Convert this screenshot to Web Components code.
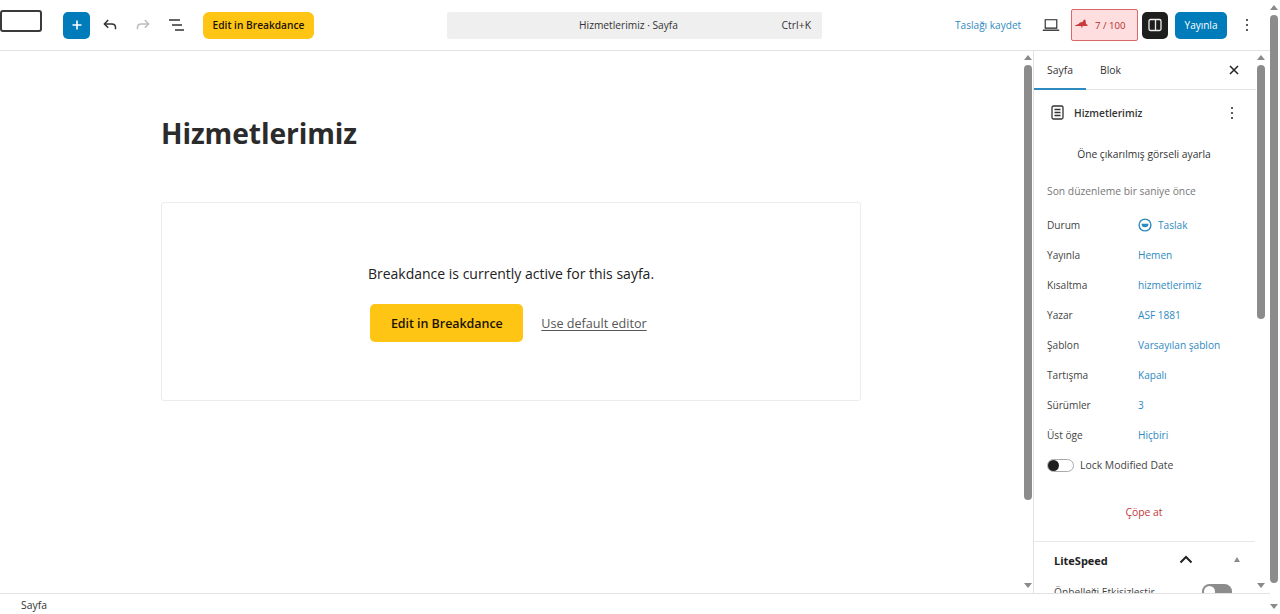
<!DOCTYPE html>
<html lang="tr"><head><meta charset="utf-8"><title>Hizmetlerimiz</title>
<style>
html,body{margin:0;height:100%;overflow:hidden;background:#fff}
body{font-family:"Open Sans","Noto Sans","Liberation Sans",sans-serif;color:#1e1e1e;display:flex;height:614px}
</style></head><body>
<wp-app></wp-app>
<script>
function def(name,css,html){
  customElements.define(name,class extends HTMLElement{
    constructor(){super();const s=this.attachShadow({mode:'open'});s.innerHTML='<style>'+css+'</style>'+html;}
  });
}
const F='font-family:"Open Sans","Noto Sans","Liberation Sans",sans-serif;';
def('wp-scrollbar',`
:host{display:flex;flex-direction:column;align-items:center;width:var(--w,10px);flex:none;height:100%;box-sizing:border-box;padding:var(--pt,4px) 0 var(--pb,4px)}
i{display:block;width:0;height:0;border-left:4.5px solid transparent;border-right:4.5px solid transparent;flex:none}
.u{border-bottom:5px solid #8a8a8a}
.d{border-top:5px solid #8a8a8a}
.t{width:8px;border-radius:4px;background:#8c8c8c;margin-top:5px;height:var(--th,100px);flex:none}
.s{flex:1}
`,`<i class="u"></i><div class="t"></div><div class="s"></div><i class="d"></i>`);

def('wp-icon-btn',`
:host{display:flex;align-items:center;justify-content:center;flex:none;width:var(--w,32px);height:var(--h,32px);color:var(--c,#1e1e1e)}
`,`<slot></slot>`);

def('wp-header',`
:host{display:flex;align-items:center;height:50px;border-bottom:1px solid #e2e2e2;flex:none;box-sizing:content-box;${F}}
.logo{width:42px;height:22px;box-sizing:border-box;border:2px solid #3a3a3a;border-radius:3px;margin:-8px 0 0 0;flex:none;background:#fff}
.add{width:27px;height:27px;background:#007cba;border-radius:5px;margin-left:21px;display:flex;align-items:center;justify-content:center;flex:none}
.undo{margin-left:4px}
.redo{margin-left:1px}
.list{margin-left:2px}
.bd{margin-left:10px;background:#ffc514;height:27px;width:111px;border-radius:6px;display:flex;align-items:center;justify-content:center;font-size:10.2px;font-weight:600;color:#1c1300;flex:none}
.cmd{margin-left:133px;width:375px;height:27px;background:#efefef;border-radius:2px;position:relative;display:flex;align-items:center;justify-content:center;font-size:10.2px;color:#333;flex:none}
.cmd span{margin-left:-12px}
.cmd em{position:absolute;right:11px;top:6px;font-style:normal;font-size:10.4px}
.save{margin-left:133px;font-size:10.1px;color:#2f8abf;white-space:nowrap;flex:none;width:67px}
.view{margin-left:13px}
.seo{margin-left:4px;width:67px;height:32px;box-sizing:border-box;border:1px solid #d9686a;background:#ffdedf;border-radius:2px;display:flex;align-items:center;color:#b32d2e;font-size:9.6px;font-weight:500;flex:none}
.seo span{margin-left:7px}
.seo svg{margin-left:3px;margin-top:-2px}
.side{margin-left:4px;width:26px;height:27px;border-radius:5px;background:#1e1e1e;display:flex;align-items:center;justify-content:center;flex:none}
.pub{margin-left:7px;width:52px;height:27px;background:#007cba;border-radius:5px;color:#fff;font-size:10px;font-weight:500;display:flex;align-items:center;justify-content:center;flex:none}
.more{margin-left:4px}
`,`
<div class="logo"></div>
<div class="add"><svg width="14" height="14" viewBox="0 0 14 14"><path d="M7 2.5v9M2.5 7h9" stroke="#fff" stroke-width="1.6"/></svg></div>
<wp-icon-btn class="undo" style="--w:32px"><svg width="18" height="18" viewBox="0 0 18 18" fill="none" stroke="#333" stroke-width="1.5"><path d="M7.2 4 3.4 7.9l3.8 3.8"/><path d="M3.6 7.9h7.2c2.4 0 3.7 1.4 3.7 3.6v1.800"/></svg></wp-icon-btn>
<wp-icon-btn class="redo" style="--w:32px"><svg width="18" height="18" viewBox="0 0 18 18" fill="none" stroke="#bdbdbd" stroke-width="1.5"><path d="M10.8 4l3.800 3.900-3.800 3.800"/><path d="M14.400 7.900H7.200c-2.400 0-3.700 1.400-3.700 3.600v1.800"/></svg></wp-icon-btn>
<wp-icon-btn class="list" style="--w:32px"><svg width="18" height="14" viewBox="0 0 18 14" stroke="#333" stroke-width="1.5"><path d="M1 2h11M4 7h10M7 12h9"/></svg></wp-icon-btn>
<div class="bd">Edit in Breakdance</div>
<div class="cmd"><span>Hizmetlerimiz · Sayfa</span><em>Ctrl+K</em></div>
<div class="save">Taslağı kaydet</div>
<wp-icon-btn class="view" style="--w:32px"><svg width="18" height="14" viewBox="0 0 18 14" fill="none" stroke="#222" stroke-width="1.1"><path d="M3.200 1.700h11.600v8.400H3.200z"/><path d="M.8 12.200h16.400" stroke-width="1.300"/></svg></wp-icon-btn>
<div class="seo"><svg width="13" height="10" viewBox="0 0 13 10" fill="#c9393b"><path d="M0 6.500 3.500 5 5 3.500 7.500 3 9 .5l1.500.5.500 4 1.500.8V7H7.500L7 9.500 6 7H0z"/></svg><span>7 / 100</span></div>
<div class="side"><svg width="14" height="14" viewBox="0 0 14 14" fill="none" stroke="#eee" stroke-width="1.300"><rect x="1" y="1.500" width="12" height="11" rx="1.500"/><path d="M7.500 1.500v11"/></svg></div>
<div class="pub">Yayınla</div>
<wp-icon-btn class="more" style="--w:32px"><svg width="4" height="14" viewBox="0 0 4 14" fill="#333"><circle cx="2" cy="2" r="1.100"/><circle cx="2" cy="7" r="1.100"/><circle cx="2" cy="12" r="1.100"/></svg></wp-icon-btn>
`);

def('wp-editor',`
:host{flex:1;min-width:0;display:flex;${F}}
.c{flex:1;min-width:0;box-sizing:border-box;padding:63px 0 0 161px}
h1{margin:0;font-size:28.200px;line-height:38px;font-weight:700;color:#2b2b2b;letter-spacing:-.1px}
.box{width:700px;height:199px;box-sizing:border-box;margin-top:50px;border:1px solid #ececec;border-radius:3px;display:flex;flex-direction:column;align-items:center;padding-top:60px}
p{margin:0;font-size:14px;line-height:22px;color:#222}
.row{display:flex;align-items:center;margin-top:19px;gap:18px;margin-left:-5px}
.b{width:153px;height:38px;background:#ffc514;border-radius:5px;display:flex;align-items:center;justify-content:center;font-size:12.500px;font-weight:600;color:#1c1300;letter-spacing:-.05px}
a{font-size:12.600px;color:#555;text-decoration:underline;text-underline-offset:2px}
wp-scrollbar{--w:10px;--pt:4px;--pb:5px;--th:435px}
`,`
<div class="c"><h1>Hizmetlerimiz</h1>
<div class="box"><p>Breakdance is currently active for this sayfa.</p>
<div class="row"><div class="b">Edit in Breakdance</div><a>Use default editor</a></div></div></div>
<wp-scrollbar></wp-scrollbar>`);

def('wp-row',`
:host{display:flex;height:30px;align-items:center;font-size:10.100px}
.l{width:91px;color:#444;flex:none}
.v{color:#2f8abf;display:flex;align-items:center;gap:6px}
`,`<div class="l"><slot name="l"></slot></div><div class="v"><slot></slot></div>`);

def('wp-sidebar',`
:host{width:237px;flex:none;display:flex;border-left:1px solid #e2e2e2;box-sizing:border-box;${F};overflow:hidden}
.c{flex:1;min-width:0;overflow:hidden}
.tabs{display:flex;height:38px;border-bottom:1px solid #e2e2e2;position:relative;font-size:10.400px;color:#333;align-items:center}
.tabs b{font-weight:400;width:52px;height:100%;display:flex;align-items:center;justify-content:center;box-sizing:border-box;border-bottom:2px solid #2f8abf;margin-bottom:-1px;flex:none}
.tabs span{margin-left:14px}
.tabs svg{margin-left:auto;margin-right:17px}
.title{display:flex;align-items:center;height:45px;padding-left:17px;font-size:10.200px;font-weight:600;color:#333}
.title span{margin-left:10px}
.title svg.m{margin-left:auto;margin-right:22px}
.feat{text-align:center;font-size:10.250px;color:#333;height:20px;line-height:20px;margin-top:9px;padding-right:2px}
.ago{font-size:10.300px;color:#777;margin:17px 0 0 13px;height:20px;line-height:20px}
.rows{padding:9px 13px 0}
.tog{display:flex;align-items:center;height:30px;font-size:10.400px;color:#444;gap:6px}
.sw{width:27px;height:13px;box-sizing:border-box;border:1px solid #aaa;border-radius:7px;position:relative;flex:none}
.sw::after{content:"";position:absolute;left:0;top:0;width:11px;height:11px;border-radius:50%;background:#1e1e1e}
.del{color:#c43a3a;font-size:10.400px;text-align:center;height:20px;line-height:20px;margin-top:22px;padding-right:2px}
.ls{border-top:1px solid #e8e8e8;margin-top:19px;height:36px;padding-bottom:4px;display:flex;align-items:center;padding-left:20px;font-size:11px;font-weight:700;color:#222;position:relative;width:201px}
.ls svg{position:absolute;left:145px;top:13px}
.ls i{position:absolute;left:200px;top:15px;width:0;height:0;border-left:3.500px solid transparent;border-right:3.500px solid transparent;border-bottom:5px solid #8a8a8a}
.cache{display:flex;align-items:center;height:20px;padding-left:20px;font-size:10.200px;color:#444;position:relative}
.cache u{position:absolute;left:168px;top:2px;width:30px;height:15px;border-radius:8px;background:#8c8c8c;text-decoration:none}
.cache u::after{content:"";position:absolute;left:2px;top:2px;width:11px;height:11px;border-radius:50%;background:#fff}
wp-scrollbar{--w:10px;--pt:4px;--pb:5px;--th:254px;margin-right:4px}
`,`
<div class="c">
<div class="tabs"><b>Sayfa</b><span>Blok</span><svg width="10" height="10" viewBox="0 0 10 10" stroke="#222" stroke-width="1.500"><path d="M1 1l8 8M9 1l-8 8"/></svg></div>
<div class="title"><svg width="13" height="15" viewBox="0 0 13 15" fill="none" stroke="#333" stroke-width="1.300"><rect x="1" y="1" width="11" height="13" rx="1.500"/><path d="M3.500 4.500h6M3.500 7.500h6M3.500 10.500h6"/></svg><span>Hizmetlerimiz</span><svg class="m" width="4" height="14" viewBox="0 0 4 14" fill="#333"><circle cx="2" cy="2" r="1.100"/><circle cx="2" cy="7" r="1.100"/><circle cx="2" cy="12" r="1.100"/></svg></div>
<div class="feat">Öne çıkarılmış görseli ayarla</div>
<div class="ago">Son düzenleme bir saniye önce</div>
<div class="rows">
<wp-row><span slot="l">Durum</span><svg width="14" height="14" viewBox="0 0 14 14" fill="none"><circle cx="7" cy="7" r="5.900" stroke="#2f8abf" stroke-width="1.400"/><path d="M3.500 5.800h7a3.500 3.500 0 0 1-7 0z" fill="#2f8abf"/></svg>Taslak</wp-row>
<wp-row><span slot="l">Yayınla</span>Hemen</wp-row>
<wp-row><span slot="l">Kısaltma</span>hizmetlerimiz</wp-row>
<wp-row><span slot="l">Yazar</span>ASF 1881</wp-row>
<wp-row><span slot="l">Şablon</span>Varsayılan şablon</wp-row>
<wp-row><span slot="l">Tartışma</span>Kapalı</wp-row>
<wp-row><span slot="l">Sürümler</span>3</wp-row>
<wp-row><span slot="l">Üst öge</span>Hiçbiri</wp-row>
<div class="tog"><div class="sw"></div>Lock Modified Date</div>
</div>
<div class="del">Çöpe at</div>
<div class="ls">LiteSpeed<svg width="14" height="9" viewBox="0 0 14 9" fill="none" stroke="#222" stroke-width="2"><path d="M1.500 7.500 7 2l5.500 5.500"/></svg><i></i></div>
<div class="cache">Önbelleği Etkisizleştir<u></u></div>
</div>
<wp-scrollbar></wp-scrollbar>`);

def('wp-status',`
:host{display:flex;align-items:center;height:19px;border-top:1px solid #e2e2e2;padding:1px 0 0 21px;font-size:10.400px;color:#333;flex:none;${F}}
`,`<slot></slot>`);

def('wp-app',`
:host{display:flex;width:1280px;height:614px;overflow:hidden}
.col{flex:1;min-width:0;display:flex;flex-direction:column;height:100%}
.main{flex:1;min-height:0;display:flex}
.outer{--w:10px;--pt:5px;--pb:5px;--th:568px;padding-right:2px}
`,`
<div class="col"><wp-header></wp-header><div class="main"><wp-editor></wp-editor><wp-sidebar></wp-sidebar></div><wp-status>Sayfa</wp-status></div>
<wp-scrollbar class="outer"></wp-scrollbar>`);
</script>
</body></html>
